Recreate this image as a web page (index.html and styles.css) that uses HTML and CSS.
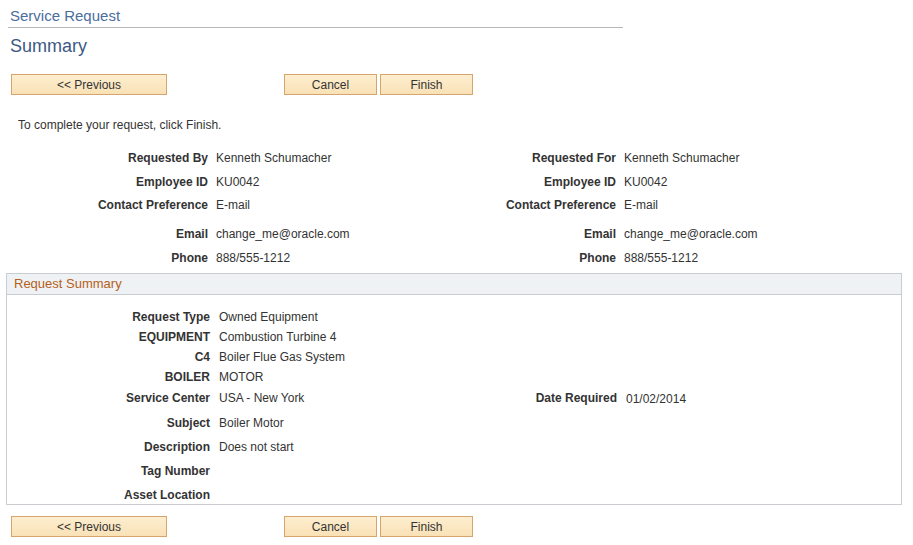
FILE: index.html
```html
<!DOCTYPE html>
<html>
<head>
<meta charset="utf-8">
<link rel="stylesheet" href="styles.css">
</head>
<body>
<div class="page">
  <div class="crumb">Service Request</div>
  <h1 class="page-title">Summary</h1>

  <div class="btn-bar top-bar">
    <button class="btn btn-prev">&lt;&lt; Previous</button>
    <div class="btn-group">
      <button class="btn">Cancel</button>
      <button class="btn">Finish</button>
    </div>
  </div>

  <p class="instr">To complete your request, click Finish.</p>

  <div class="info-grid">
    <div class="lbl">Requested By</div><div class="val">Kenneth Schumacher</div>
    <div class="lbl">Requested For</div><div class="val">Kenneth Schumacher</div>

    <div class="lbl">Employee ID</div><div class="val">KU0042</div>
    <div class="lbl">Employee ID</div><div class="val">KU0042</div>

    <div class="lbl">Contact Preference</div><div class="val">E-mail</div>
    <div class="lbl">Contact Preference</div><div class="val">E-mail</div>

    <div class="lbl">Email</div><div class="val">change_me@oracle.com</div>
    <div class="lbl">Email</div><div class="val">change_me@oracle.com</div>

    <div class="lbl">Phone</div><div class="val">888/555-1212</div>
    <div class="lbl">Phone</div><div class="val">888/555-1212</div>
  </div>

  <section class="box">
    <div class="box-head">Request Summary</div>
    <div class="box-grid">
      <div class="lbl">Request Type</div><div class="val">Owned Equipment</div><div></div><div></div>
      <div class="lbl">EQUIPMENT</div><div class="val">Combustion Turbine 4</div><div></div><div></div>
      <div class="lbl">C4</div><div class="val">Boiler Flue Gas System</div><div></div><div></div>
      <div class="lbl">BOILER</div><div class="val">MOTOR</div><div></div><div></div>
      <div class="lbl">Service Center</div><div class="val">USA - New York</div>
      <div class="lbl">Date Required</div><div class="val date">01/02/2014</div>
      <div class="lbl">Subject</div><div class="val">Boiler Motor</div><div></div><div></div>
      <div class="lbl">Description</div><div class="val">Does not start</div><div></div><div></div>
      <div class="lbl">Tag Number</div><div class="val"></div><div></div><div></div>
      <div class="lbl">Asset Location</div><div class="val"></div><div></div><div></div>
    </div>
  </section>

  <div class="btn-bar bottom-bar">
    <button class="btn btn-prev">&lt;&lt; Previous</button>
    <div class="btn-group">
      <button class="btn">Cancel</button>
      <button class="btn">Finish</button>
    </div>
  </div>
</div>
</body>
</html>
```

FILE: styles.css
```css
* { box-sizing: border-box; }

body {
  margin: 0;
  background: #ffffff;
  font-family: "Liberation Sans", Arial, sans-serif;
  font-size: 12px;
  color: #333333;
}

.page {
  width: 913px;
}

.crumb {
  margin-left: 8px;
  width: 615px;
  padding: 7px 0 2px 2px;
  font-size: 15px;
  line-height: 18px;
  color: #4b6d9c;
  border-bottom: 1px solid #b7b7b7;
}

.page-title {
  margin: 7px 0 0 10px;
  font-size: 18px;
  line-height: 22px;
  font-weight: normal;
  color: #3c5a84;
}

.btn-bar {
  display: flex;
  align-items: center;
  padding-left: 11px;
}

.top-bar { margin-top: 17px; }
.bottom-bar { margin-top: 11px; }

.btn-group {
  display: flex;
  gap: 3px;
  margin-left: 117px;
}

.btn {
  height: 21px;
  width: 93px;
  padding: 1px 0 0 0;
  font-family: "Liberation Sans", Arial, sans-serif;
  font-size: 12px;
  line-height: 18px;
  color: #333333;
  background: linear-gradient(#fdeecf, #f9e1b6);
  border: 1px solid #d6a46d;
  border-radius: 0;
}

.btn-prev { width: 156px; }

.instr {
  margin: 23px 0 0 18px;
  line-height: 14px;
}

.info-grid {
  display: grid;
  grid-template-columns: 208px 208px 200px 1fr;
  grid-template-rows: 24px 23px 29px 24px 14px;
  margin-top: 19px;
  line-height: 14px;
}

.info-grid .val { padding-left: 8px; }

.lbl {
  text-align: right;
  font-weight: bold;
  color: #333333;
  white-space: nowrap;
}

.val {
  white-space: nowrap;
}

.box {
  margin: 8px 0 0 6px;
  width: 896px;
  border: 1px solid #c9cdd1;
}

.box-head {
  height: 21px;
  padding-left: 7px;
  font-size: 13px;
  line-height: 20px;
  color: #b6601a;
  background: #eef2f4;
  border-bottom: 1px solid #c9cdd1;
}

.box-grid {
  display: grid;
  grid-template-columns: 203px 198px 209px 1fr;
  grid-template-rows: 20px 20px 20px 21px 25px 24px 24px 24px 14px;
  padding: 15px 0 2px 0;
  line-height: 14px;
}

.box-grid .val { padding-left: 9px; }
.box-grid .date { padding-top: 1px; }
```
